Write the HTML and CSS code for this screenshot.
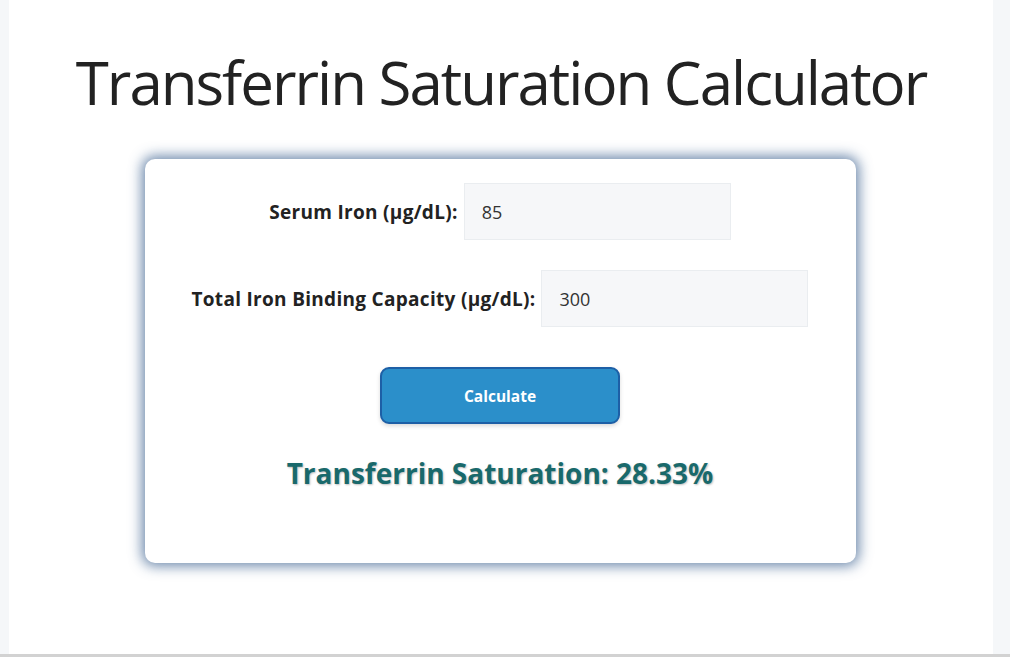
FILE: index.html
```html
<!DOCTYPE html>
<html lang="en">
<head>
<meta charset="utf-8">
<title>Transferrin Saturation Calculator</title>
<link rel="stylesheet" href="styles.css">
</head>
<body>
<div class="viewport">
  <main class="page">
    <h1 class="title">Transferrin Saturation Calculator</h1>
    <section class="card">
      <div class="row">
        <label class="label" for="iron">Serum Iron (µg/dL):</label>
        <input class="field" id="iron" type="text" value="85">
      </div>
      <div class="row">
        <label class="label" for="tibc">Total Iron Binding Capacity (µg/dL):</label>
        <input class="field" id="tibc" type="text" value="300">
      </div>
      <button class="btn" type="button">Calculate</button>
      <p class="result">Transferrin Saturation: 28.33%</p>
    </section>
  </main>
</div>
<div class="hbar"></div>
</body>
</html>
```
FILE: styles.css
```css
html, body {
  margin: 0;
  padding: 0;
}
body {
  height: 657px;
  overflow: hidden;
  display: flex;
  flex-direction: column;
  background: #f5f7f9;
  font-family: "Open Sans", "Noto Sans", sans-serif;
  color: #212529;
}
.viewport {
  flex: 1;
  display: flex;
}
.page {
  margin-left: 9px;
  width: 984px;
  background: #ffffff;
  display: flex;
  flex-direction: column;
  align-items: center;
}
.title {
  margin: 43px 0 37px;
  font-size: 60px;
  font-weight: 400;
  line-height: 79px;
  color: #222222;
  letter-spacing: -2px;
}
.card {
  width: 711px;
  height: 404px;
  box-sizing: border-box;
  padding-top: 24px;
  background: #ffffff;
  border-radius: 10px;
  box-shadow: 0 0 13px 3px rgba(45, 85, 135, 0.7);
  display: flex;
  flex-direction: column;
  align-items: center;
  transform: translateX(-1px);
}
.row {
  display: flex;
  align-items: center;
  gap: 6px;
  margin-bottom: 30px;
}
.label {
  font-weight: 700;
  font-size: 19px;
  letter-spacing: 0.3px;
  color: #222222;
}
.field {
  width: 267px;
  height: 57px;
  box-sizing: border-box;
  padding: 0 17px;
  border: 1px solid #eaedf0;
  background: #f6f7f9;
  font-family: inherit;
  font-size: 18px;
  color: #333333;
  outline: none;
}
.btn {
  margin-top: 10px;
  width: 240px;
  height: 57px;
  background: #2b8fca;
  border: 2px solid #1d5fa6;
  border-radius: 9px;
  color: #ffffff;
  font-family: inherit;
  font-weight: 700;
  font-size: 15.5px;
  box-shadow: 0 2px 4px rgba(0, 0, 0, 0.15);
}
.result {
  margin: 30px 0 0;
  font-size: 28px;
  font-weight: 700;
  color: #19696b;
  text-shadow: 1px 1px 2px rgba(0, 0, 0, 0.25);
}
.hbar {
  height: 3px;
  background: #d2d2d2;
}
```
